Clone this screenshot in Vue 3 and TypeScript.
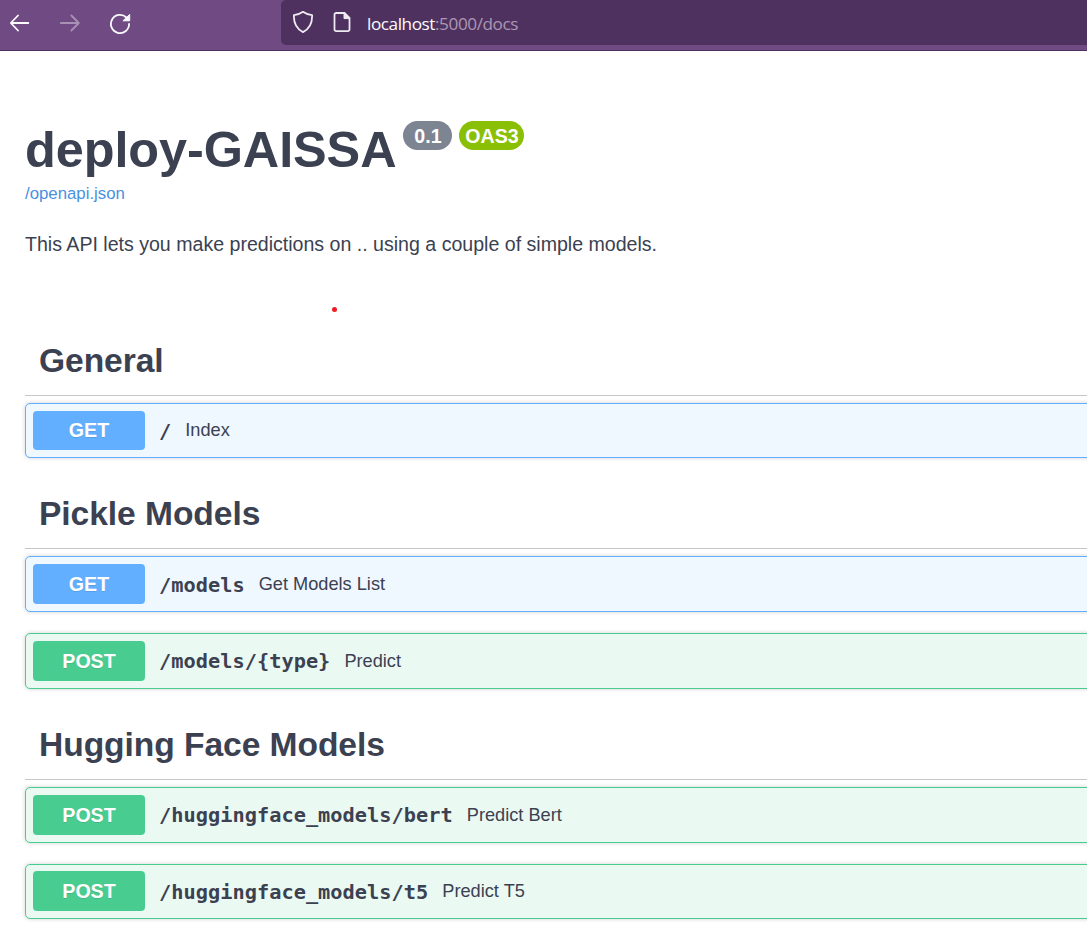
<script setup lang="ts">
interface Operation {
  method: 'get' | 'post'
  path: string
  summary: string
  fit?: 'first' | 'last' | 'lowered'
}

interface Section {
  name: string
  operations: Operation[]
}

const sections: Section[] = [
  { name: 'General', operations: [{ method: 'get', path: '/', summary: 'Index', fit: 'first' }] },
  {
    name: 'Pickle Models',
    operations: [
      { method: 'get', path: '/models', summary: 'Get Models List', fit: 'lowered' },
      { method: 'post', path: '/models/{type}', summary: 'Predict' },
    ],
  },
  {
    name: 'Hugging Face Models',
    operations: [
      { method: 'post', path: '/huggingface_models/bert', summary: 'Predict Bert' },
      { method: 'post', path: '/huggingface_models/t5', summary: 'Predict T5', fit: 'last' },
    ],
  },
]
</script>

<template>
  <div class="page">
    <header class="toolbar">
      <nav class="nav">
        <svg class="icon" width="22" height="22" viewBox="0 0 22 22">
          <path d="M19.300 11H2M9 3.500L1.800 11 9 18.500" />
        </svg>
        <svg class="icon faded" width="22" height="22" viewBox="0 0 22 22">
          <path d="M1.800 11h18M12.400 3.500l7.400 7.500-7.400 7.500" />
        </svg>
        <svg class="icon" width="22" height="22" viewBox="0 0 22 22">
          <path d="M20.100 12a9.100 9.100 0 1 1-2.700-6.500" />
          <path class="solid" d="M20.700 2.800v6h-6.400z" />
        </svg>
      </nav>
      <div class="address">
        <svg class="icon shield" width="22" height="24" viewBox="0 0 22 24">
          <path d="M11 1.800C8.400 3.700 5 4.900 1.900 5.200c-.3 7.800 2.700 13.800 9.100 16.900 6.400-3.100 9.400-9.100 9.100-16.900C17 4.900 13.600 3.700 11 1.800z" />
        </svg>
        <svg class="icon doc" width="18" height="22" viewBox="0 0 18 22">
          <path d="M11.500 2H3.200a1.700 1.700 0 0 0-1.700 1.700v14.800a1.700 1.700 0 0 0 1.700 1.700h11.600a1.700 1.700 0 0 0 1.700-1.700V7z" />
          <path class="solid" d="M11 2v5.600h5.400z" />
        </svg>
        <span class="url"><b>localhost</b>:5000/docs</span>
      </div>
    </header>

    <main class="content">
      <section class="info">
        <div class="heading">
          <h1>deploy-GAISSA</h1>
          <span class="badge version">0.1</span>
          <span class="badge oas">OAS3</span>
        </div>
        <a class="spec">/openapi.json</a>
        <p>This API lets you make predictions on .. using a couple of simple models.</p>
        <i class="dot"></i>
      </section>

      <section v-for="section in sections" :key="section.name" class="group">
        <h2>{{ section.name }}</h2>
        <div v-for="op in section.operations" :key="op.path" class="op" :class="[op.method, op.fit]">
          <span class="method">{{ op.method.toUpperCase() }}</span>
          <span class="path">{{ op.path }}</span>
          <span class="summary">{{ op.summary }}</span>
        </div>
      </section>
    </main>
  </div>
</template>

<style>
html,
body {
  margin: 0;
  background: #fff;
  overflow: hidden;
}
</style>

<style scoped>
.page {
  width: 100%;
  height: 927px;
  overflow: hidden;
  color: #3b4151;
  font-family: 'Liberation Sans', Arial, sans-serif;
}

.toolbar {
  box-sizing: border-box;
  height: 51px;
  display: flex;
  background: #704b83;
  border-bottom: 1px solid #4e315e;
}

.nav {
  width: 281px;
  flex: none;
  box-sizing: border-box;
  display: flex;
  gap: 28px;
  padding: 12px 0 0 9px;
}

.icon {
  flex: none;
  fill: none;
  stroke: #fbfbfe;
  stroke-width: 1.8;
  stroke-linecap: round;
  stroke-linejoin: round;
}

.icon .solid {
  fill: #fbfbfe;
  stroke-width: 1;
}

.faded {
  opacity: 0.4;
}

.address {
  flex: 1;
  height: 45px;
  display: flex;
  align-items: flex-start;
  background: #4e315e;
  border-radius: 5px 0 0 5px;
}

.shield {
  margin: 10px 0 0 11px;
}

.doc {
  margin: 11px 0 0 19px;
}

.shield,
.doc {
  opacity: 0.92;
}

.url {
  margin: 11px 0 0 16px;
  font: 17.2px/26px 'Open Sans', 'Noto Sans', sans-serif;
  letter-spacing: -0.44px;
  color: #ab97b5;
  white-space: nowrap;
}

.url b {
  font-weight: 400;
  color: #fbfbfe;
}

.content {
  padding-left: 25px;
}

.info {
  height: 275px;
  padding-top: 70px;
  box-sizing: border-box;
}

.heading {
  display: flex;
  align-items: flex-start;
  height: 58px;
}

h1 {
  margin: 0;
  font-size: 50.4px;
  line-height: 58px;
  letter-spacing: -0.07px;
  white-space: nowrap;
}

.badge {
  box-sizing: border-box;
  height: 29px;
  border-radius: 15px;
  color: #fff;
  font-size: 19.6px;
  font-weight: 700;
  line-height: 30px;
  text-align: center;
}

.version {
  width: 49px;
  margin-left: 7px;
  background: #7d8492;
}

.oas {
  width: 65px;
  margin-left: 7px;
  background: #89bf04;
}

.spec {
  display: block;
  margin-top: 5px;
  font-size: 16.8px;
  line-height: 20px;
  color: #4990e2;
}

p {
  margin: 28px 0 0;
  font-size: 19.6px;
  line-height: 24px;
  letter-spacing: -0.01px;
}

.dot {
  display: block;
  width: 5px;
  height: 5px;
  margin: 51px 0 0 306.5px;
  border-radius: 50%;
  background: #ee1c24;
}

.group h2 {
  box-sizing: border-box;
  height: 70px;
  margin: 0 0 7px;
  padding: 15px 0 0 14px;
  border-bottom: 1px solid #c4c6ca;
  font-size: 33.6px;
  line-height: 40px;
  letter-spacing: -0.06px;
}

.group + .group h2 {
  margin-top: 21px;
}

.op {
  box-sizing: border-box;
  height: 56px;
  display: flex;
  align-items: center;
  margin: 0 -10px 21px 0;
  padding: 7px;
  border: 1px solid;
  border-radius: 5px;
  box-shadow: 0 0 4px rgba(0, 0, 0, 0.19);
}

.first {
  height: 55px;
}

.last {
  height: 55px;
  padding-top: 6px;
}

.get {
  background: #eff7ff;
  border-color: #61affe;
}

.post {
  background: #ebf9f3;
  border-color: #49cc90;
}

.method {
  align-self: stretch;
  width: 112px;
  display: flex;
  align-items: center;
  justify-content: center;
  border-radius: 4px;
  color: #fff;
  font-size: 19.6px;
  font-weight: 700;
  text-shadow: 0 1px 0 rgba(0, 0, 0, 0.1);
}

.get .method {
  background: #61affe;
}

.post .method {
  background: #49cc90;
}

.path {
  margin-left: 14px;
  font: 700 20.3px/24px 'DejaVu Sans Mono', monospace;
  letter-spacing: 0.03px;
}

.lowered .path,
.last .path {
  margin-top: 2px;
}

.summary {
  margin-left: 14px;
  font-size: 18.2px;
  line-height: 22px;
}

.first .summary {
  margin-bottom: 2px;
}
</style>
